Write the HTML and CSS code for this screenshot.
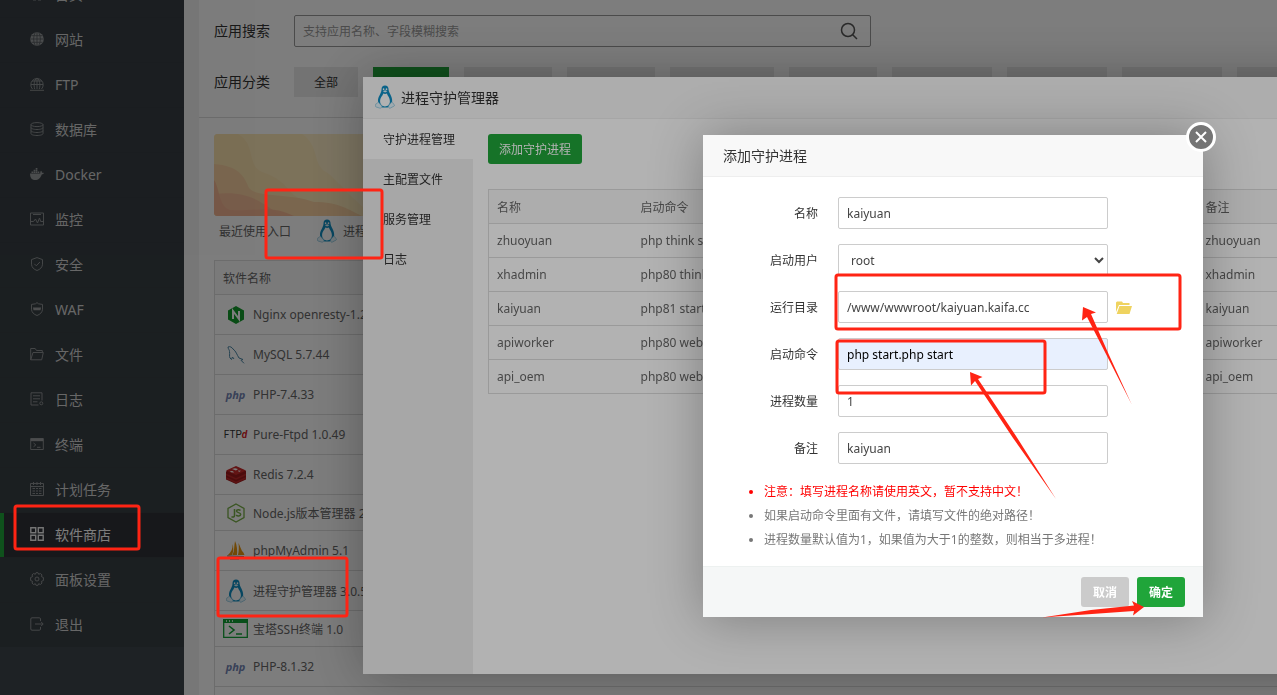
FILE: index.html
```html
<!DOCTYPE html>
<html lang="zh-CN">
    <head>
        <meta charset="UTF-8" />
        <meta name="viewport" content="width=device-width, initial-scale=1.0" />
        <title>软件商店</title>
        <link rel="stylesheet" href="styles.css">
    </head>
    <body>
        <svg class="symbols" aria-hidden="true">
            <symbol id="tux" viewBox="0 0 20 24">
                <path d="M6.500 4.500C6.500 1.800 7.800.4 10 .4s3.700 1.500 3.600 4.300c.2 3.300 3.800 6.300 3.600 11.800l-2.200 4.500-2.500 1.500h-5L5 21l-2-4.500C2.600 11.500 6.600 8.500 6.500 4.500z" fill="#0f8fc4" />
                <path d="M8.300 8.500c1 .6 2.600.6 3.600 0 .6 2.300 3 4 3 7.800 0 3.300-2.300 5.200-4.900 5.200s-4.900-1.900-4.900-5.200c0-3.800 2.600-5.500 3.200-7.800z" fill="#fff" />
                <ellipse cx="8.600" cy="4.200" rx=".8" ry="1" fill="#fff" />
                <ellipse cx="11.500" cy="4.200" rx=".8" ry="1" fill="#fff" />
                <path d="M7.900 6.200l2.200-.9 2.200.9-2.200 1.200z" fill="#e3f4fb" />
                <path d="M3.200 17.200l3.600 3.800c.6 1.200-.5 2.400-2.100 2.100L.9 21.900c-.9-.4-.2-1.500-.3-2.400 0-1.200 1.700-.5 2.600-2.300z" fill="#e5f4fb" stroke="#7cbfda" stroke-width=".7" />
                <path d="M16.600 17.200l-2.700 3c-.6 1.800-.4 3.300 1.200 3l4.100-2.200c.9-.6-.1-1.300-.6-1.900-.4-.9-1-1.800-2-1.900z" fill="#e5f4fb" stroke="#7cbfda" stroke-width=".7" />
            </symbol>
        </svg>

        <div class="app">
            <nav class="sidebar">
                <ul class="menu">
                    <li><a href="#"><svg viewBox="0 0 14 14"><path d="M1 6l6-5 6 5M3 6v7h3V9h2v4h3V6" /></svg>首页</a></li>
                    <li><a href="#"><svg viewBox="0 0 14 14"><circle class="solid" cx="7" cy="7" r="6.800" /><path class="cut" d="M7 .5v13M.5 7h13M1.500 3.700h11M1.500 10.300h11M5 1C3.200 4 3.200 10 5 13M9 1c1.800 3 1.800 9 0 12" /></svg>网站</a></li>
                    <li><a href="#"><svg viewBox="0 0 14 14"><path d="M2.500 12A6.200 6.200 0 1 1 11.500 12M0 13.300h14M7 1v11M1 7.500h12M2 4h10M4.700 12C3.500 8 4 3 7 1c3 2 3.500 7 2.300 11" /></svg>FTP</a></li>
                    <li><a href="#"><svg viewBox="0 0 14 14"><ellipse cx="7" cy="2.600" rx="6" ry="2" /><path d="M1 2.600v9c0 1 2.500 1.900 6 1.900s6-.9 6-1.900v-9M1 5.600c0 1 2.500 1.900 6 1.900s6-.9 6-1.900M1 8.600c0 1 2.500 1.900 6 1.900s6-.9 6-1.900" /></svg>数据库</a></li>
                    <li><a href="#"><svg viewBox="0 0 14 14"><path class="solid" d="M0 6.500h10.300c-.2-1 .1-2 .7-2.700.7.500 1 1.100 1 1.900.7-.1 1.300 0 2 .4-.4.900-1.300 1.300-2.300 1.300C10.600 10.600 8.600 13 5 13 2 13 .1 11 0 6.500zM1.500 4.600h1.700V6H1.500zM3.600 4.600h1.700V6H3.600zM5.700 4.600h1.700V6H5.700zM7.800 4.600h1.500V6H7.800zM3.600 2.800h1.700v1.400H3.600zM5.700 2.800h1.700v1.400H5.700zM5.700 1h1.700v1.400H5.700z" /></svg>Docker</a></li>
                    <li><a href="#"><svg viewBox="0 0 14 14"><path d="M.5 1h13v12H.5zM3 2.500h8M.5 9.500h3L5.500 7l2 4 2-5 1.200 3.500h2.800" /></svg>监控</a></li>
                    <li><a href="#"><svg viewBox="0 0 14 14"><path d="M7 .6l5.500 2v4.600c0 3-2.400 5.200-5.500 6.300C3.900 12.400 1.500 10.200 1.500 7.200V2.600zM4.300 6.800l2 2 3.600-3.800" /></svg>安全</a></li>
                    <li><a href="#"><svg viewBox="0 0 14 14"><path d="M7 .6l1.500 1.200 4 .6v4.800c0 3-2.400 5.200-5.500 6.300C3.900 12.400 1.500 10.200 1.500 7.200V2.400l4-.6z" /><path class="solid" d="M3 5.500h8l-.5 2.800h-7z" /></svg>WAF</a></li>
                    <li><a href="#"><svg viewBox="0 0 14 14"><path d="M.7 12.800V1.500h4.500l1.300 2h5.800v2M.7 12.800h11L13.300 5.500H3L.7 12.800" /></svg>文件</a></li>
                    <li><a href="#"><svg viewBox="0 0 14 14"><path d="M8.500 13H1V.8h11v7.700M3 3.800h7M3 6.800h7M3 9.800h4.500" /><circle cx="11.300" cy="11.300" r="1.500" /></svg>日志</a></li>
                    <li><a href="#"><svg viewBox="0 0 14 14"><path d="M.7 1.500h12.600v11H.7zM3.500 6l2.300 1.900-2.300 1.900M7 10.300h3.500" /><path class="solid" d="M.7 1.500h12.600v2.700H.7z" /></svg>终端</a></li>
                    <li><a href="#"><svg viewBox="0 0 14 14"><path d="M.5 1.500h13v12H.5zM.5 4.500h13M3.500 0v3M7 0v3M10.500 0v3M2.500 6.500h2.500M6 6.500h2M9 6.500h2.500M2.500 9h2.500M6 9h2M9 9h2.500M2.500 11.500h2.500M6 11.500h2M9 11.500h2.500" /></svg>计划任务</a></li>
                    <li class="active"><a href="#"><svg viewBox="0 0 14 14"><path d="M.8.8h4.900v4.900H.8zM8.300.8h4.900v4.900H8.300zM.8 8.300h4.900v4.900H.8zM8.300 8.300h4.900v4.900H8.300z" /></svg>软件商店</a></li>
                    <li><a href="#"><svg viewBox="0 0 14 14"><path d="M5.300 2.300L6 .7h2l.7 1.600 1.700-.8 1.600 1.400-.6 1.700 2 .9v3l-2 .9.6 1.700-1.600 1.400-1.700-.8L8 13.300H6l-.7-1.600-1.700.8L2 11.100l.6-1.700-2-.9v-3l2-.9L2 2.900l1.600-1.400z" /><circle cx="7" cy="7" r="2" /></svg>面板设置</a></li>
                    <li><a href="#"><svg viewBox="0 0 14 14"><path d="M10.500 4V2a1.200 1.200 0 0 0-1.200-1.200H2A1.200 1.200 0 0 0 .8 2v10A1.200 1.200 0 0 0 2 13.200h7.300a1.200 1.200 0 0 0 1.200-1.200v-2M5 7h8M11 4.800L13.200 7 11 9.200" /></svg>退出</a></li>
                </ul>
            </nav>

            <main class="store">
                <div class="filter-row">
                    <label class="filter-label" for="search">应用搜索</label>
                    <div class="search">
                        <input type="text" id="search" placeholder="支持应用名称、字段模糊搜索" />
                        <button type="button" aria-label="搜索"><svg viewBox="0 0 18 18"><circle cx="8" cy="8" r="6.500" /><path d="M12.700 12.700L17 17" /></svg></button>
                    </div>
                </div>
                <div class="filter-row categories">
                    <span class="filter-label">应用分类</span>
                    <div class="category-list">
                        <button type="button">全部</button>
                        <button type="button" class="on">已安装</button>
                        <button type="button">运行环境</button>
                        <button type="button">安全防护</button>
                        <button type="button" class="wide">免费插件</button>
                        <button type="button">系统工具</button>
                        <button type="button">专业版插件</button>
                        <button type="button">企业版插件</button>
                        <button type="button">第三方应用</button>
                        <button type="button">一键部署</button>
                    </div>
                </div>

                <div class="soft">
                    <svg class="banner" aria-hidden="true">
                        <rect width="100%" height="82" fill="#fdedc6" />
                        <path d="M0 0h88c18 12 10 30 24 38 12 8 22 24 48 44H0z" fill="#fce8b8" />
                        <path d="M0 0h24c18 10 9 32 24 38 24 8 24 18 36 26 22 8 22 10 25 18H0z" fill="#fbe2ae" />
                        <path d="M0 30c25 2 30 12 35 24 8 10 40 5 65 14 25 0 35 8 48 14H0z" fill="#f8d0a0" />
                        <path d="M0 46c6 8 4 26 16 30 25 2 40-6 64 6H0z" fill="#f3b692" />
                        <path d="M0 60c38-4 48 10 68 22H0z" fill="#f3b092" opacity=".6" />
                    </svg>
                    <div class="recent">
                        <span>最近使用入口</span>
                        <a href="#"><svg class="tux"><use href="#tux" /></svg>进程守护管理器</a>
                    </div>
                    <table class="soft-table">
                        <thead>
                            <tr><th>软件名称</th></tr>
                        </thead>
                        <tbody>
                            <tr><td><div class="soft-name">
                                <span class="logo"><svg width="18" height="18" viewBox="0 0 18 18"><path d="M9 0l8 4.500v9L9 18l-8-4.500v-9z" fill="#139b2c" /><path d="M6 13V5l6 8V5" fill="none" stroke="#fff" stroke-width="2" /></svg></span>
                                <span>Nginx openresty-1.21.4</span></div></td></tr>
                            <tr><td><div class="soft-name">
                                <span class="logo"><svg width="18" height="18" viewBox="0 0 18 18" fill="none" stroke="#4b87a6"><path d="M1 1c2-1 4 .3 5 2 3 2 4 6 6 9l4 1.500-2 .8 3 3M1 1c0 2 1.500 2.500 1.500 4.500C3 8 2 10 3 12l1.500 1.500L5.500 11 7 13" /></svg></span>
                                <span>MySQL 5.7.44</span></div></td></tr>
                            <tr><td><div class="soft-name"><span class="logo php">php</span><span>PHP-7.4.33</span></div></td></tr>
                            <tr><td><div class="soft-name"><span class="logo ftp">FTP<i>d</i></span><span>Pure-Ftpd 1.0.49</span></div></td></tr>
                            <tr><td><div class="soft-name">
                                <span class="logo"><svg width="20" height="18" viewBox="0 0 20 18"><path d="M0 5.500L10 1l10 4v8.500L10 18 0 13.500z" fill="#9c1a1c" /><path d="M0 4.500L10 0l10 4.500L10 9z" fill="#c92a2a" /><path d="M0 8.500l10 4.500 10-4.500M0 12l10 4.500L20 12" fill="none" stroke="#bd2828" stroke-width="1.500" /><path d="M6 3l3-.8L12 3l-2 1.500zM4 5l3 .2 1 1.300-3-.2zM12 4.500l3 .3-2 1.200z" fill="#fff" /></svg></span>
                                <span>Redis 7.2.4</span></div></td></tr>
                            <tr class="short"><td><div class="soft-name">
                                <span class="logo"><svg width="18" height="20" viewBox="0 0 18 20" fill="none" stroke="#77ad46" stroke-width="1.300"><path d="M9 1l8 4.500v9L9 19l-8-4.500v-9z" /><path d="M7.500 6v6.500c0 1.600-1.500 2-3 1.200M13.500 7.500c-1-1-4-1-4 .6 0 2 4.200 1 4.200 3.200 0 2-3.500 2-4.500.7" stroke-width="1.500" /></svg></span>
                                <span>Node.js版本管理器 2.2</span></div></td></tr>
                            <tr><td><div class="soft-name">
                                <span class="logo"><svg width="18" height="19" viewBox="0 0 18 19"><path d="M5.500 3c.5 4-1 8-5 11.500l4.500-.5c1.500-3 1.700-8 .5-11zM8 0c-1 5-.5 10-2.500 14H10c.5-4 0-10-2-14zM11.500 2c.5 4 .5 8-.5 12h6.500c-1-3-2-3.500-2.500-4-1-2-2-5-3.500-8z" fill="#e7950f" /><path d="M0 15l17 .5M3 18h9" stroke="#747474" stroke-width="1.200" /></svg></span>
                                <span>phpMyAdmin 5.1</span></div></td></tr>
                            <tr><td><div class="soft-name"><span class="logo"><svg class="tux"><use href="#tux" /></svg></span><span>进程守护管理器 3.0.5</span></div></td></tr>
                            <tr class="short"><td><div class="soft-name">
                                <span class="logo"><svg width="25" height="19" viewBox="0 0 25 19" fill="none" stroke="#12a236" stroke-width="1.300"><path d="M.7.700h23.600v17.600H.7z" /><path d="M0 0h25v4H0z" fill="#12a236" stroke="none" /><path d="M6 7l5 4-5 4M13 15h6" stroke-width="1.600" /><path d="M3 2h1M6 2h1M9 2h1" stroke="#fff" /></svg></span>
                                <span>宝塔SSH终端 1.0</span></div></td></tr>
                            <tr><td><div class="soft-name"><span class="logo php">php</span><span>PHP-8.1.32</span></div></td></tr>
                            <tr><td><div class="soft-name"></div></td></tr>
                        </tbody>
                    </table>
                </div>
            </main>
        </div>

        <div class="mask"></div>
        <section class="dialog manager">
            <header class="dialog-title"><svg class="tux"><use href="#tux" /></svg>进程守护管理器</header>
            <div class="manager-body">
                <nav class="tabs">
                    <a href="#" class="active">守护进程管理</a>
                    <a href="#">主配置文件</a>
                    <a href="#">服务管理</a>
                    <a href="#">日志</a>
                </nav>
                <div class="manager-main">
                    <button type="button" class="btn">添加守护进程</button>
                    <table class="process-table">
                        <thead>
                            <tr><th class="col-name">名称</th><th>启动命令</th><th class="col-remark">备注</th></tr>
                        </thead>
                        <tbody>
                            <tr><td>zhuoyuan</td><td>php think start</td><td>zhuoyuan</td></tr>
                            <tr><td>xhadmin</td><td>php80 think start</td><td>xhadmin</td></tr>
                            <tr><td>kaiyuan</td><td>php81 start.php</td><td>kaiyuan</td></tr>
                            <tr><td>apiworker</td><td>php80 webman</td><td>apiworker</td></tr>
                            <tr><td>api_oem</td><td>php80 webman</td><td>api_oem</td></tr>
                        </tbody>
                    </table>
                </div>
            </div>
        </section>

        <div class="mask"></div>
        <form class="dialog add-process">
            <header class="dialog-title">添加守护进程</header>
            <button type="button" class="close" aria-label="关闭"><svg viewBox="0 0 12 12"><path d="M1 1l10 10M11 1L1 11" /></svg></button>
            <div class="form-body">
                <div class="form-group">
                    <label for="name">名称</label>
                    <input type="text" id="name" value="kaiyuan" />
                </div>
                <div class="form-group">
                    <label for="user">启动用户</label>
                    <select id="user">
                        <option>root</option>
                        <option>www</option>
                    </select>
                </div>
                <div class="form-group">
                    <label for="path">运行目录</label>
                    <input type="text" id="path" value="/www/wwwroot/kaiyuan.kaifa.cc" />
                    <button type="button" class="folder" aria-label="选择目录"><svg viewBox="0 0 16 13"><path d="M0 11V1.500L1 .5h5l1 1.500h6.500v2H3z" /><path d="M3.500 5H16l-2.500 8H.7z" /></svg></button>
                </div>
                <div class="form-group">
                    <label for="command">启动命令</label>
                    <input type="text" id="command" class="autofilled" value="php start.php start" />
                </div>
                <div class="form-group">
                    <label for="count">进程数量</label>
                    <input type="text" id="count" value="1" />
                </div>
                <div class="form-group">
                    <label for="remark">备注</label>
                    <input type="text" id="remark" value="kaiyuan" />
                </div>
                <ul class="help">
                    <li class="warn">注意：填写进程名称请使用英文，暂不支持中文！</li>
                    <li>如果启动命令里面有文件，请填写文件的绝对路径！</li>
                    <li>进程数量默认值为1，如果值为大于1的整数，则相当于多进程！</li>
                </ul>
            </div>
            <footer class="dialog-footer">
                <button type="button" class="btn cancel">取消</button>
                <button type="submit" class="btn">确定</button>
            </footer>
        </form>

        <svg class="marks" aria-hidden="true">
            <g class="boxes">
                <rect x="15" y="506" width="124" height="43" rx="2" />
                <rect x="266" y="190" width="116" height="68" rx="2" />
                <rect x="218" y="558" width="129" height="58" rx="2" />
                <rect x="836" y="275" width="344" height="54" rx="2" />
                <rect x="837" y="341" width="208" height="52" rx="2" />
            </g>
            <path d="M1083 307l13 5.500-5 1.500 18 41 22.500 49-24.500-48-20-39-5 3.500z" />
            <path d="M970 372l12.500 5-4.500 2 38 57 40 63-43-61-38-57-4 4.500z" />
            <path d="M1144 607l-12-6 2 4.500-43 4.500-49 7.500 50-3.500 42-3-1 4.500z" />
        </svg>
    </body>
</html>
```
FILE: styles.css
```css
* {
    box-sizing: border-box;
}

body {
    margin: 0;
    height: 100vh;
    overflow: hidden;
    background: #f3f3f3;
    color: #666;
    font-family: "Noto Sans", "Noto Sans CJK SC", sans-serif;
    font-size: 12px;
}

button,
input,
select {
    font: inherit;
    color: inherit;
}

button {
    border: 0;
    cursor: pointer;
}

a {
    color: inherit;
    text-decoration: none;
}

ul {
    margin: 0;
    padding: 0;
}

table {
    border-collapse: collapse;
    width: 100%;
}

th {
    font-weight: normal;
    text-align: left;
}

.symbols {
    position: absolute;
    width: 0;
    height: 0;
}

.tux {
    width: 20px;
    height: 24px;
}

.app {
    display: flex;
    height: 100vh;
    overflow: hidden;
}

/* sidebar */
.sidebar {
    flex: none;
    width: 184px;
    background: #3d464d;
    overflow: hidden;
}

/* the menu is scrolled part of the way down */
.menu {
    margin-top: -28px;
    list-style: none;
    background: #383f44;
}

.menu li {
    height: 45px;
    border-top: 1px solid #373d42;
}

.menu a {
    display: flex;
    align-items: center;
    gap: 11px;
    height: 44px;
    padding: 0 0 2px 30px;
    color: #d2d2d2;
    font-size: 14px;
}

.menu svg {
    width: 14px;
    height: 14px;
    fill: none;
    stroke: #8c9092;
}

.menu .solid {
    fill: #999c9e;
    stroke: none;
}

.menu .cut {
    stroke: #50565a;
    stroke-width: 0.8;
}

.menu .active a {
    padding-left: 26px;
    border-left: 4px solid #20a53a;
    background: #2f3238;
    color: #fff;
}

.menu .active svg {
    stroke: #eee;
    stroke-width: 1.4;
}

/* store */
.store {
    flex: 1;
    min-width: 0;
    margin-left: 15px;
    padding-top: 15px;
    background: #fff;
    overflow: hidden;
}

.filter-row {
    display: flex;
    align-items: center;
    padding: 0 15px;
}

.filter-label {
    flex: none;
    width: 80px;
    padding-bottom: 2px;
    color: #333;
    font-size: 14px;
}

.search {
    display: flex;
    width: 577px;
    height: 32px;
    border: 1px solid #999;
    border-radius: 2px;
}

.search input {
    flex: 1;
    padding: 0 8px;
    border: 0;
    background: none;
}

.search input::placeholder {
    color: #999;
}

.search button {
    display: flex;
    align-items: center;
    padding: 0 12px;
    background: none;
}

.search svg {
    width: 18px;
    height: 18px;
    fill: none;
    stroke: #555;
    stroke-width: 1.5;
}

.categories {
    padding-top: 20px;
    padding-bottom: 20px;
    border-bottom: 1px solid #ddd;
}

.category-list {
    display: flex;
    gap: 15px;
}

.category-list button {
    flex: none;
    height: 30px;
    padding: 0 20px;
    background: #eaeaea;
    color: #333;
}

.category-list button + button {
    padding-top: 4px;
}

.category-list .on {
    background: #20a53a;
    color: #fff;
}

.category-list .wide {
    padding-left: 28px;
    padding-right: 28px;
}

.soft {
    padding: 16px 0 0 15px;
}

.banner {
    display: block;
    width: 100%;
    height: 82px;
    border-radius: 4px;
}

.recent {
    display: flex;
    align-items: center;
    gap: 26px;
    height: 30px;
    margin-bottom: 14px;
    padding-left: 5px;
}

.recent a {
    display: flex;
    align-items: center;
    gap: 6px;
}

.soft-table,
.process-table {
    border: 1px solid #ddd;
}

.soft-table {
    border-right: 0;
}

.soft-table th {
    height: 34px;
    padding: 0 8px;
    background: #f8f8f8;
}

.soft-table td {
    height: 40px;
    padding: 0 8px;
    border-top: 1px solid #ddd;
}

.soft-table .short td {
    height: 36px;
}

.soft-name {
    display: flex;
    align-items: center;
    gap: 5px;
}

.logo {
    display: flex;
    justify-content: center;
    width: 25px;
}

.php {
    color: #7384b3;
    font-size: 11px;
    font-weight: bold;
    font-style: italic;
}

.ftp {
    color: #333;
    font-family: Roboto, sans-serif;
    font-size: 10px;
}

.ftp i {
    color: #d8232a;
    font-weight: bold;
}

/* dialogs */
.mask {
    position: fixed;
    inset: 0;
    background: rgba(0, 0, 0, 0.3);
}

.dialog {
    position: fixed;
    background: #fff;
    box-shadow: 1px 1px 50px rgba(0, 0, 0, 0.3);
}

.dialog-title {
    display: flex;
    align-items: center;
    height: 42px;
    padding: 0 20px 2px;
    border-bottom: 1px solid #eee;
    background: #f8f8f8;
    color: #333;
    font-size: 14px;
}

.manager {
    display: flex;
    flex-direction: column;
    left: 363px;
    right: -86px;
    top: 77px;
    bottom: 21px;
}

.manager .dialog-title {
    flex: none;
    gap: 6px;
    padding-left: 12px;
}

.manager-body {
    display: flex;
    flex: 1;
}

.tabs {
    flex: none;
    width: 110px;
    background: #f0f0f0;
    color: #333;
}

.tabs a {
    display: block;
    height: 40px;
    padding-left: 20px;
    line-height: 42px;
}

.tabs .active {
    background: #fff;
}

.manager-main {
    flex: 1;
    padding: 15px;
}

.btn {
    height: 30px;
    padding: 0 11px;
    border-radius: 3px;
    background: #20a53a;
    color: #fff;
}

.process-table {
    margin-top: 25px;
    table-layout: fixed;
    white-space: nowrap;
}

.process-table th,
.process-table td {
    height: 34px;
    padding: 0 8px;
    border-bottom: 1px solid #ddd;
}

.process-table th {
    background: #f8f8f8;
}

.col-name {
    width: 144px;
}

.col-remark {
    width: 150px;
}

.add-process {
    left: 703px;
    top: 135px;
    width: 500px;
}

.close {
    position: absolute;
    top: -13px;
    right: -13px;
    display: flex;
    align-items: center;
    justify-content: center;
    width: 30px;
    height: 30px;
    padding: 0;
    border: 3px solid #fff;
    border-radius: 50%;
    background: #757575;
}

.close svg {
    width: 12px;
    height: 12px;
    stroke: #fff;
    stroke-width: 2;
}

.form-body {
    padding: 20px 0 14px;
}

.form-group {
    display: flex;
    align-items: center;
    margin-bottom: 15px;
}

.form-group label {
    width: 135px;
    padding-right: 20px;
    color: #333;
    text-align: right;
}

.form-group input,
.form-group select {
    width: 270px;
    height: 32px;
    padding: 0 8px;
    border: 1px solid #ccc;
    border-radius: 2px;
    background: #fff;
    color: #444;
}

.form-group .autofilled {
    background: #e8f0fe;
    color: #000;
}

.folder {
    display: flex;
    margin-left: 8px;
    padding: 0;
    background: none;
}

.folder svg {
    width: 16px;
    height: 13px;
    fill: #efd35f;
}

.help {
    padding: 1px 0 0 61px;
    color: #777;
    line-height: 24px;
}

.help .warn {
    color: #f00;
}

.dialog-footer {
    display: flex;
    justify-content: flex-end;
    gap: 8px;
    padding: 10px 18px;
    border-top: 1px solid #edf1f0;
    background: #f5f7f7;
}

.dialog-footer .btn {
    padding: 0 12px;
    font-weight: bold;
}

.dialog-footer .cancel {
    background: #cbcbcb;
}

/* red boxes and arrows over the page */
.marks {
    position: fixed;
    inset: 0;
    width: 100%;
    height: 100%;
    fill: #ff2414;
    pointer-events: none;
}

.boxes {
    fill: none;
    stroke: #ff2414;
    stroke-width: 3;
}
```
